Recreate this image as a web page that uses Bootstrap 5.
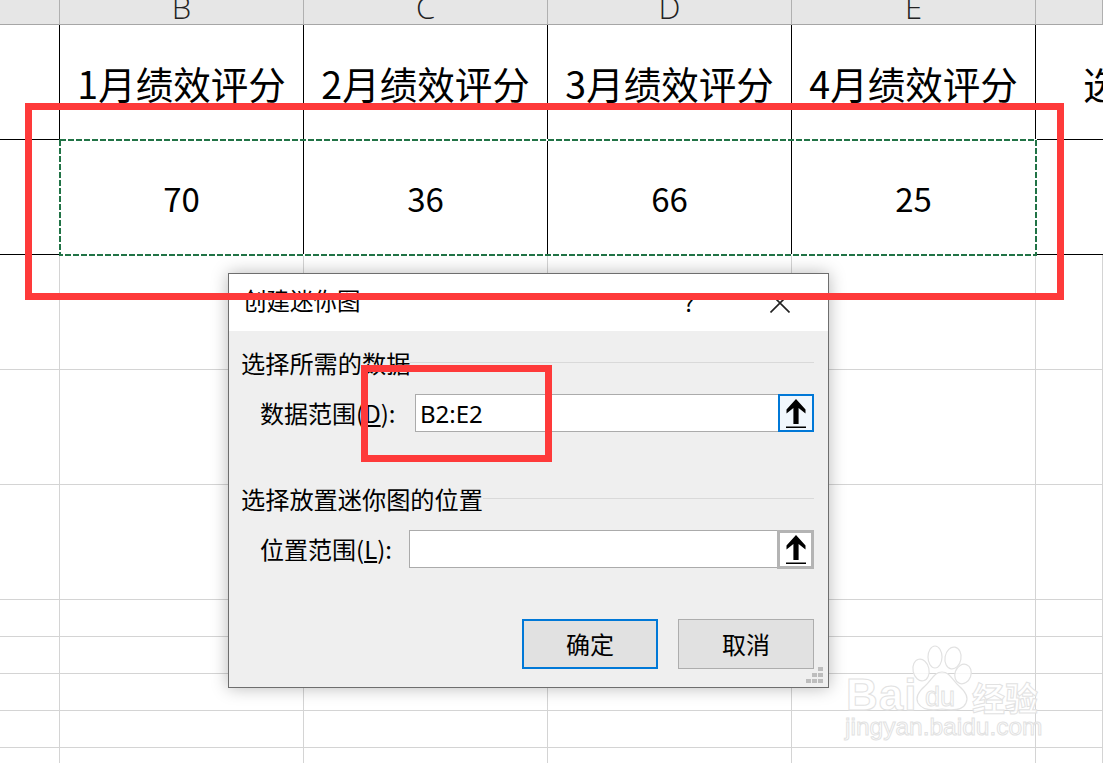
<!DOCTYPE html>
<html lang="zh-CN">
<head>
<meta charset="UTF-8">
<title>创建迷你图</title>
<link href="https://cdn.jsdelivr.net/npm/bootstrap@5.3.2/dist/css/bootstrap.min.css" rel="stylesheet">
<style>
  html, body { margin: 0; height: 763px; overflow: hidden; background: #fff; }
  body { position: relative; font-family: "Noto Sans CJK SC", "Noto Sans", sans-serif; color: #000; }

  /* worksheet */
  .sheet { width: 1103px; table-layout: fixed; border-collapse: separate; border-spacing: 0; margin: 0; }
  .sheet > * > tr > * { padding: 0; border: 0; border-right: 1px solid #d4d4d4; border-bottom: 1px solid #d4d4d4; background: #fff; color: #000; box-shadow: none; overflow: hidden; white-space: nowrap; }
  .sheet > thead > tr > th { height: 25px; background: #e6e6e6; border-right-color: #b0b0b0; border-bottom-color: #a6a6a6; font-family: "Open Sans", sans-serif; font-weight: 300; font-size: 31px; line-height: 25px; color: #222; text-align: center; vertical-align: bottom; }
  .sheet .col-letter { display: block; margin-top: -13px; height: 34px; line-height: 34px; }
  .sheet > tbody > tr > td { vertical-align: middle; text-align: center; }
  .sheet > tbody > tr.row-tall > td { height: 115px; }
  .sheet > tbody > tr.row-short > td { height: 37px; }
  .sheet > tbody > tr.row-data > td { border-color: #000; font-size: 33px; padding-top: 4px; }
  .sheet > tbody > tr.row-data > td.head-cell { font-size: 37.500px; padding-top: 2px; }
  .sheet > tbody > tr.row-data > td.clip-cell { text-align: left; padding-left: 47px; border-right: 0; }
  .sheet > tbody > tr.row-data > td.rowhead { border-right-color: #000; }
  .copy-ants { position: absolute; left: 59px; top: 139px; }

  /* dialog window */
  .spark-dialog { position: absolute; left: 228px; top: 273px; width: 601px; height: 415px; background: #efefef; border: 1px solid #6e6e6e; box-shadow: 0 0 16px rgba(0,0,0,.28); font-size: 24px; }
  .dlg-title { height: 57px; background: #fff; padding-left: 14px; }
  .dlg-title-text { font-size: 23.500px; line-height: 53px; padding-bottom: 4px; }
  .dlg-help { width: 20px; text-align: center; font-size: 23px; margin-right: 71px; line-height: 1; }
  .dlg-close { margin-right: 38px; }
  .dlg-body { padding: 16px 14px 0 12px; }
  .group-head { height: 34px; font-size: 24.200px; line-height: 32px; }
  .group-head > span:first-child { padding-bottom: 2px; }
  .group-line { height: 1px; background: #d9d9d9; margin-top: -4px; }
  .field-row { padding-left: 19px; height: 38px; font-size: 24px; }
  .field-one { margin-top: 13px; }
  .field-two { margin-top: 13px; }
  .group-two { margin-top: 51px; }
  .field-label { white-space: nowrap; flex: none; }
  .label-one { width: 155px; }
  .label-two { width: 149px; }
  .range-input.form-control { flex: 1 1 0; min-width: 0; border: 1px solid #ababab; border-right: 0; border-radius: 0; background: #fff; padding: 0 4px; height: 38px; font-family: "Noto Sans", sans-serif; font-size: 24px; line-height: 36px; box-shadow: none; color: #000; }
  .pick-btn { flex: none; width: 36px; height: 38px; padding: 0; background: #f1f7fd; border: 2px solid #0078d7; display: flex; align-items: center; justify-content: center; }
  .pick-idle { width: 37px; height: 39px; background: #fff; border: 3px solid #b4b4b4; }
  .dlg-buttons { margin-top: 51px; gap: 20px; }
  .dlg-btn.btn { width: 136px; height: 50px; padding: 0; border-radius: 0; background: #e1e1e1; border: 1px solid #adadad; font-size: 24px; color: #000; }
  .dlg-btn.dlg-default { border: 2px solid #0078d7; }
  .size-grip { position: absolute; right: 5px; bottom: 3px; }

  /* marker rectangles drawn on the screenshot */
  .mark-box { position: absolute; border: 7px solid #fe3a3a; }
  .mark-wide { left: 25px; top: 103px; width: 1039px; height: 197px; }
  .mark-small { left: 361px; top: 365px; width: 191px; height: 97px; }

  /* watermark */
  .wm { position: absolute; left: 840px; top: 640px; width: 215px; height: 110px; pointer-events: none; }
  .wm-text { position: absolute; color: rgba(255,255,255,.85); -webkit-text-stroke: 1px #e2e2e2; white-space: nowrap; line-height: 1; }
  .wm-bai { left: 6px; top: 30px; font: 700 44px "Liberation Sans", sans-serif; letter-spacing: 1px; }
  .wm-du { left: 85px; top: 42px; font: 400 27px "Liberation Sans", sans-serif; }
  .wm-jing { left: 132px; top: 33px; font: 700 33px "Noto Sans CJK SC", sans-serif; }
  .wm-url { left: 5px; top: 73px; font: 400 24.500px "Liberation Sans", sans-serif; }
  .wm-paw { position: absolute; left: 70px; top: 5px; }
</style>
</head>
<body>

<table class="table sheet">
  <colgroup>
    <col style="width:60px"><col style="width:244px"><col style="width:244px"><col style="width:244px"><col style="width:244px"><col>
  </colgroup>
  <thead>
    <tr><th></th><th><span class="col-letter">B</span></th><th><span class="col-letter">C</span></th><th><span class="col-letter">D</span></th><th><span class="col-letter">E</span></th><th></th></tr>
  </thead>
  <tbody>
    <tr class="row-tall row-data"><td class="rowhead"></td><td class="head-cell">1月绩效评分</td><td class="head-cell">2月绩效评分</td><td class="head-cell">3月绩效评分</td><td class="head-cell">4月绩效评分</td><td class="head-cell clip-cell">选择</td></tr>
    <tr class="row-tall row-data"><td class="rowhead"></td><td>70</td><td>36</td><td>66</td><td>25</td><td class="clip-cell"></td></tr>
    <tr class="row-tall"><td></td><td></td><td></td><td></td><td></td><td></td></tr>
    <tr class="row-tall"><td></td><td></td><td></td><td></td><td></td><td></td></tr>
    <tr class="row-tall"><td></td><td></td><td></td><td></td><td></td><td></td></tr>
    <tr class="row-short"><td></td><td></td><td></td><td></td><td></td><td></td></tr>
    <tr class="row-short"><td></td><td></td><td></td><td></td><td></td><td></td></tr>
    <tr class="row-short"><td></td><td></td><td></td><td></td><td></td><td></td></tr>
    <tr class="row-short"><td></td><td></td><td></td><td></td><td></td><td></td></tr>
    <tr class="row-short"><td></td><td></td><td></td><td></td><td></td><td></td></tr>
  </tbody>
</table>

<svg class="copy-ants" width="978" height="117" fill="none">
  <rect x="1" y="1" width="976" height="115" stroke="#fff" stroke-width="2"/>
  <rect x="1" y="1" width="976" height="115" stroke="#217346" stroke-width="2" stroke-dasharray="6 2"/>
</svg>

<!-- watermark -->
<div class="wm">
  <svg class="wm-paw" width="66" height="70" viewBox="0 0 66 70" fill="rgba(255,255,255,.8)" stroke="#e2e2e2" stroke-width="1.2">
    <ellipse cx="11" cy="25" rx="8" ry="11" transform="rotate(-12 11 25)"/>
    <ellipse cx="25" cy="12" rx="7" ry="11"/>
    <ellipse cx="43" cy="13" rx="8" ry="11" transform="rotate(10 43 13)"/>
    <ellipse cx="53" cy="29" rx="8" ry="10" transform="rotate(20 53 29)"/>
    <path d="M32 27c8 0 10 8 17 14 7 6 10 11 7 17-3 7-11 8-24 6-12 2-20 1-24-6-3-6 0-11 7-17 7-6 9-14 17-14z"/>
  </svg>
  <span class="wm-text wm-bai">Bai</span>
  <span class="wm-text wm-du">du</span>
  <span class="wm-text wm-jing">经验</span>
  <span class="wm-text wm-url">jingyan.baidu.com</span>
</div>

<!-- dialog -->
<div class="spark-dialog" role="dialog">
  <div class="dlg-title d-flex align-items-center">
    <div class="dlg-title-text flex-grow-1">创建迷你图</div>
    <div class="dlg-help">?</div>
    <svg class="dlg-close" width="20" height="20" viewBox="0 0 20 20" fill="none" stroke="#222" stroke-width="1.6"><path d="M0.5 0.5 19.5 19.5M19.5 0.5 0.5 19.5"/></svg>
  </div>
  <div class="dlg-body">
    <div class="group-head d-flex align-items-center">
      <span>选择所需的数据</span><span class="group-line flex-grow-1"></span>
    </div>
    <div class="field-row field-one d-flex align-items-center">
      <label class="field-label label-one" for="dataRange">数据范围(<u>D</u>):</label>
      <input id="dataRange" class="form-control range-input" type="text" value="B2:E2">
      <button class="pick-btn" type="button" aria-label="选择">
        <svg width="20" height="29" viewBox="0 0 20 29"><path d="M10 0 19.500 10.500V14.500L12.600 9V25H7.400V9L.5 14.500V10.500Z" fill="#000"/><rect y="27.500" width="20" height="1.500" fill="#000"/></svg>
      </button>
    </div>
    <div class="group-head group-two d-flex align-items-center">
      <span>选择放置迷你图的位置</span><span class="group-line flex-grow-1"></span>
    </div>
    <div class="field-row field-two d-flex align-items-center">
      <label class="field-label label-two" for="posRange">位置范围(<u>L</u>):</label>
      <input id="posRange" class="form-control range-input" type="text">
      <button class="pick-btn pick-idle" type="button" aria-label="选择">
        <svg width="20" height="29" viewBox="0 0 20 29"><path d="M10 0 19.500 10.500V14.500L12.600 9V25H7.400V9L.5 14.500V10.500Z" fill="#000"/><rect y="27.500" width="20" height="1.500" fill="#000"/></svg>
      </button>
    </div>
    <div class="dlg-buttons d-flex justify-content-end align-items-start">
      <button class="btn dlg-btn dlg-default" type="button">确定</button>
      <button class="btn dlg-btn" type="button">取消</button>
    </div>
  </div>
  <svg class="size-grip" width="17" height="17" viewBox="0 0 17 17" fill="#bdbdbd"><rect x="12" y="0" width="5" height="4"/><rect x="6" y="6" width="5" height="4"/><rect x="12" y="6" width="5" height="4"/><rect x="0" y="12" width="5" height="4"/><rect x="6" y="12" width="5" height="4"/><rect x="12" y="12" width="5" height="4"/></svg>
</div>

<div class="mark-box mark-wide"></div>
<div class="mark-box mark-small"></div>

<script src="https://cdn.jsdelivr.net/npm/bootstrap@5.3.2/dist/js/bootstrap.bundle.min.js"></script>
</body>
</html>
